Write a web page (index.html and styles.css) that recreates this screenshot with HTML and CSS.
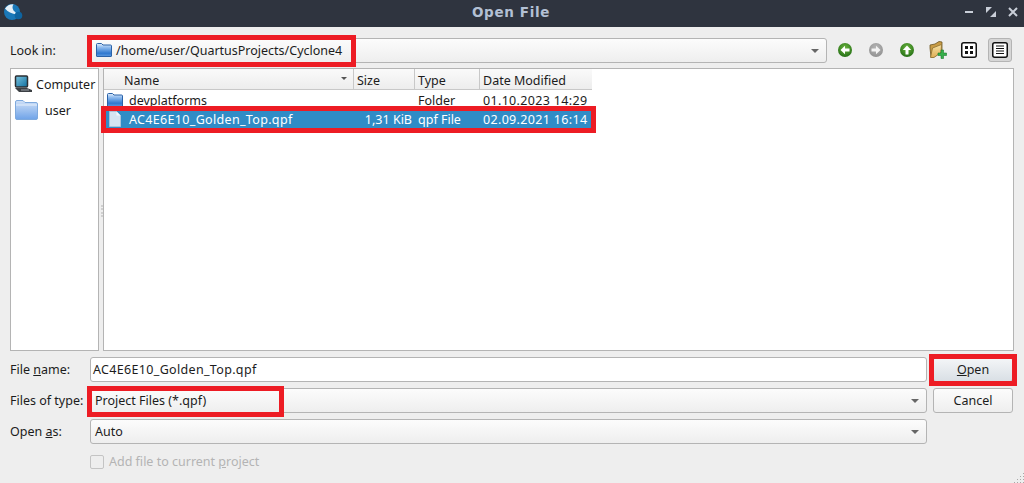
FILE: index.html
```html
<!DOCTYPE html>
<html lang="en">
<head>
    <meta charset="UTF-8">
    <title>Open File</title>
    <link rel="stylesheet" href="styles.css">
</head>
<body>
    <svg width="0" height="0" class="defs">
        <defs>
            <linearGradient id="folderBlue" x1="0" y1="0" x2="0" y2="1">
                <stop offset="0" stop-color="#e3eefb"/>
                <stop offset="0.3" stop-color="#8fbbee"/>
                <stop offset="0.75" stop-color="#2f78cf"/>
                <stop offset="1" stop-color="#5f9be0"/>
            </linearGradient>
            <linearGradient id="folderPale" x1="0" y1="0" x2="0" y2="1">
                <stop offset="0" stop-color="#cfe0f7"/>
                <stop offset="1" stop-color="#6fa3e8"/>
            </linearGradient>
            <linearGradient id="folderTan" x1="0" y1="0" x2="0" y2="1">
                <stop offset="0" stop-color="#f8e3a6"/>
                <stop offset="1" stop-color="#dfae55"/>
            </linearGradient>
            <radialGradient id="greenBall" cx="0.5" cy="0.35" r="0.7">
                <stop offset="0" stop-color="#6cb53e"/>
                <stop offset="1" stop-color="#1f6a12"/>
            </radialGradient>
            <radialGradient id="greyBall" cx="0.5" cy="0.35" r="0.7">
                <stop offset="0" stop-color="#b8b8b8"/>
                <stop offset="1" stop-color="#8e8e8e"/>
            </radialGradient>
            <linearGradient id="screenBlue" x1="0" y1="0" x2="1" y2="1">
                <stop offset="0" stop-color="#7cc4e0"/>
                <stop offset="1" stop-color="#0f6f9e"/>
            </linearGradient>
            <symbol id="folder" viewBox="0 0 16 14">
                <path d="M.5 13V1.500q0-1 1-1h4l1.500 1.500h7.500q1 0 1 1V13q0 .5-.5.5H1q-.5 0-.5-.5z" fill="url(#folderBlue)" stroke="#2a62a8" stroke-width="1"/>
            </symbol>
        </defs>
    </svg>

    <div class="dialog">
        <header class="titlebar">
            <svg class="app-icon" width="20" height="20" viewBox="0 0 20 20">
                <circle cx="9" cy="9" r="8" fill="#1a78b8"/>
                <path d="M2 5.500Q5 1 10.500 1.200 8.500 4 10.500 7.500q2 3 6 3.500-5 1-9.500-1.500Q4 8 2 5.500z" fill="#e6f0f7"/>
                <circle cx="15.500" cy="12.500" r="3.800" fill="#0e64a0"/>
            </svg>
            <span class="title">Open File</span>
            <div class="win-buttons">
                <svg width="10" height="10" viewBox="0 0 10 10"><path d="M1 5h8" stroke="#c9ced8" stroke-width="2"/></svg>
                <svg width="10" height="10" viewBox="0 0 10 10"><path d="M0 0h6L0 6zM10 10H4l6-6z" fill="#c9ced8"/></svg>
                <svg width="10" height="10" viewBox="0 0 10 10"><path d="M1 1l8 8M9 1l-8 8" stroke="#c9ced8" stroke-width="2"/></svg>
            </div>
        </header>

        <main class="content">
            <div class="lookin-row">
                <label class="lookin-label">Look in:</label>
                <div class="combo lookin-combo">
                    <svg class="combo-folder" width="16" height="14"><use href="#folder"/></svg>
                    <span>/home/user/QuartusProjects/Cyclone4</span>
                    <i class="arrow"></i>
                    <b class="mark mark-lookin"></b>
                </div>
                <div class="tools">
                    <svg class="tool" width="16" height="16" viewBox="0 0 16 16">
                        <circle cx="8" cy="8" r="7" fill="url(#greenBall)"/>
                        <path d="M3.500 8L8 3.800V6.500h4.500v3H8v2.700z" fill="#fff"/>
                    </svg>
                    <svg class="tool" width="16" height="16" viewBox="0 0 16 16">
                        <circle cx="8" cy="8" r="7" fill="url(#greyBall)"/>
                        <path d="M12.500 8L8 3.800V6.500H3.500v3H8v2.700z" fill="#f4f4f4"/>
                    </svg>
                    <svg class="tool" width="16" height="16" viewBox="0 0 16 16">
                        <circle cx="8" cy="8" r="7" fill="url(#greenBall)"/>
                        <path d="M8 3.500L12.200 8H9.500v4.500h-3V8H3.800z" fill="#fff"/>
                    </svg>
                    <svg class="tool" width="18" height="18" viewBox="0 0 18 18">
                        <path d="M1 7V4l5-1 4-2.500 3 .5v10l-9 5H2z" fill="#c99c45" stroke="#6d5522" stroke-width=".8"/>
                        <path d="M1.500 16.500L3.500 7l9-3.500-.5 8-7 5z" fill="url(#folderTan)" stroke="#8a6d2e" stroke-width=".8"/>
                        <path d="M12 9v3h3v2.500h-3v3H9.500v-3h-3V12h3V9z" fill="#35b04a" stroke="#1c7a2e" stroke-width=".6" transform="translate(2.500 0)"/>
                    </svg>
                    <span class="view-btn">
                        <svg width="16" height="16" viewBox="0 0 16 16">
                            <rect x=".75" y=".75" width="14.500" height="14.500" rx="2" fill="#fff" stroke="#111" stroke-width="1.500"/>
                            <path d="M4 4h3v3H4zM9 4h3v3H9zM4 9h3v3H4zM9 9h3v3H9z" fill="#111"/>
                        </svg>
                    </span>
                    <span class="view-btn active">
                        <svg width="16" height="16" viewBox="0 0 16 16">
                            <rect x=".75" y=".75" width="14.500" height="14.500" rx="2" fill="#fff" stroke="#111" stroke-width="1.500"/>
                            <path d="M4 4h8M4 6.500h8M4 9h8M4 11.500h8" stroke="#111" stroke-width="1.200"/>
                        </svg>
                    </span>
                </div>
            </div>

            <div class="browser">
                <aside class="sidebar">
                    <div class="side-item side-computer">
                        <svg width="19" height="18" viewBox="0 0 19 18">
                            <rect x="1.500" y="1" width="12" height="11" rx="1" fill="url(#screenBlue)" stroke="#2b2f33" stroke-width="1.500"/>
                            <path d="M1 13h12l5 2v2H5z" fill="#3c4044"/>
                            <path d="M7 15h8" stroke="#9aa0a6"/>
                        </svg>
                        <span>Computer</span>
                    </div>
                    <div class="side-item side-user">
                        <svg width="23" height="20" viewBox="0 0 23 20">
                            <path d="M.5 18V2q0-1.500 1.500-1.500h6L10 2.500h11q1.500 0 1.500 1.500v14q0 1.500-1.500 1.500H2Q.5 19.500.5 18z" fill="url(#folderPale)" stroke="#7ea9dd"/>
                            <path d="M1 5h21" stroke="#e4eefb"/>
                        </svg>
                        <span>user</span>
                    </div>
                </aside>

                <section class="files">
                    <div class="file-head">
                        <div class="col col-name head-cell">Name<i class="sort"></i></div>
                        <div class="col col-size head-cell">Size</div>
                        <div class="col col-type head-cell">Type</div>
                        <div class="col col-date head-cell">Date Modified</div>
                    </div>
                    <div class="file-row">
                        <div class="col col-name cell">
                            <svg width="16" height="14"><use href="#folder"/></svg>
                            <span>devplatforms</span>
                        </div>
                        <div class="col col-size cell"></div>
                        <div class="col col-type cell">Folder</div>
                        <div class="col col-date cell wide-text">01.10.2023 14:29</div>
                    </div>
                    <div class="file-row selected">
                        <div class="col col-name cell wide-text">
                            <svg width="16" height="16" viewBox="0 0 16 16">
                                <path d="M2.500.500h7l4 4v11h-11z" fill="#d5e4f1" stroke="#a9c4db"/>
                                <path d="M9.500.500v4h4z" fill="#f3f8fc"/>
                            </svg>
                            <span>AC4E6E10_Golden_Top.qpf</span>
                        </div>
                        <div class="col col-size cell size-value">1,31 KiB</div>
                        <div class="col col-type cell">qpf File</div>
                        <div class="col col-date cell wide-text">02.09.2021 16:14</div>
                        <b class="mark mark-row"></b>
                    </div>
                    <div class="splitter"></div>
                </section>
            </div>

            <div class="form">
                <label>File <u>n</u>ame:</label>
                <div class="input wide-text">AC4E6E10_Golden_Top.qpf</div>
                <button class="btn btn-open"><u>O</u>pen<b class="mark mark-open"></b></button>

                <label>Files of type:</label>
                <div class="combo">
                    <span>Project Files (*.qpf)</span>
                    <i class="arrow"></i>
                    <b class="mark mark-type"></b>
                </div>
                <button class="btn">Cancel</button>

                <label>Open <u>a</u>s:</label>
                <div class="combo">
                    <span>Auto</span>
                    <i class="arrow"></i>
                </div>
                <div></div>

                <div></div>
                <div class="check-row">
                    <i class="checkbox"></i>
                    <span>Add file to current <u>p</u>roject</span>
                </div>
            </div>
        </main>
    </div>
    <div class="grip"></div>
</body>
</html>
```

FILE: styles.css
```css
* {
    box-sizing: border-box;
}
html, body {
    margin: 0;
    height: 100%;
    overflow: hidden;
}
body {
    font-family: "Noto Sans", sans-serif;
    font-size: 12.500px;
    color: #1c1c1c;
    background: #eeeeee;
}
.defs {
    position: absolute;
}
.wide-text {
    letter-spacing: 0.33px;
}
.titlebar {
    height: 27px;
    background: #2f343f;
    display: flex;
    align-items: center;
    justify-content: center;
    position: relative;
}
.app-icon {
    position: absolute;
    left: 3px;
    top: 3px;
}
.title {
    font-family: "DejaVu Sans", sans-serif;
    font-weight: bold;
    font-size: 13.500px;
    color: #b3c0d4;
    letter-spacing: 0.65px;
    margin: -4px 2px 0 0;
}
.win-buttons {
    position: absolute;
    right: 6px;
    top: 7px;
    display: flex;
    gap: 12px;
}
.content {
    padding: 8px 10px 0;
}
.lookin-row {
    display: flex;
    align-items: center;
    height: 30px;
}
.lookin-label {
    flex: none;
    width: 80px;
}
.combo {
    position: relative;
    display: flex;
    align-items: center;
    height: 25px;
    padding-left: 4px;
    border: 1px solid #b4b4b4;
    border-radius: 3px;
    background: linear-gradient(#fcfcfc, #eeeeee);
}
.lookin-combo {
    flex: none;
    width: 737px;
    padding-left: 5px;
    gap: 4px;
}
.combo-folder {
    flex: none;
}
.arrow {
    position: absolute;
    right: 7px;
    top: 10px;
    width: 0;
    height: 0;
    border-left: 4px solid transparent;
    border-right: 4px solid transparent;
    border-top: 4px solid #666;
}
.tools {
    flex: 1;
    display: flex;
    align-items: center;
    padding-left: 10px;
}
.tool {
    flex: none;
    margin-right: 15px;
}
.tool:nth-child(4) {
    margin-left: -1px;
    margin-right: 10px;
}
.view-btn {
    flex: none;
    width: 24px;
    height: 24px;
    display: flex;
    align-items: center;
    justify-content: center;
    border: 1px solid transparent;
    border-radius: 3px;
}
.view-btn.active {
    margin-left: 7px;
    background: #d6d6d6;
    border-color: #b4b4b4;
}
.browser {
    display: flex;
    gap: 4px;
    height: 283px;
    margin-top: 3px;
}
.sidebar {
    width: 89px;
    background: #fff;
    border: 1px solid #b4b4b4;
    padding-top: 5px;
}
.side-item {
    display: flex;
    align-items: center;
}
.side-computer {
    height: 20px;
    padding-left: 3px;
    gap: 3px;
}
.side-user {
    height: 32px;
    padding-left: 4px;
    gap: 7px;
}
.files {
    flex: 1;
    position: relative;
    background: #fff;
    border: 1px solid #b4b4b4;
}
.file-head {
    display: flex;
    height: 21px;
    width: 488px;
    background: linear-gradient(#fafafa, #ececec);
}
.head-cell {
    position: relative;
    border-right: 1px solid #c8c8c8;
    border-bottom: 1px solid #c8c8c8;
    padding: 2px 0 0 3px;
    line-height: 20px;
}
.head-cell:first-child {
    padding-left: 20px;
}
.head-cell:last-child {
    border-right: none;
}
.sort {
    position: absolute;
    right: 6px;
    top: 8px;
    width: 0;
    height: 0;
    border-left: 3px solid transparent;
    border-right: 3px solid transparent;
    border-top: 3px solid #555;
}
.file-row {
    position: relative;
    display: flex;
    width: 488px;
    height: 18px;
    margin-top: 1px;
}
.col-name {
    width: 250px;
}
.col-size {
    width: 61px;
}
.col-type {
    width: 65px;
}
.col-date {
    width: 112px;
}
.cell {
    display: flex;
    align-items: center;
    padding-left: 3px;
    white-space: nowrap;
}
.cell svg {
    margin-right: 6px;
    flex: none;
}
.size-value {
    justify-content: flex-end;
    padding-right: 3px;
}
.file-row.selected {
    background: #308cc6;
    color: #fff;
}
.splitter {
    position: absolute;
    left: -3px;
    top: 136px;
    width: 2px;
    height: 12px;
    border-left: 2px dotted #cfcfcf;
}
.form {
    display: grid;
    grid-template-columns: 80px 837px 80px;
    grid-auto-rows: 25px;
    row-gap: 6px;
    margin-top: 6px;
    align-items: center;
}
.form .btn {
    margin-left: 6px;
    width: 80px;
}
.input {
    height: 25px;
    padding-left: 2px;
    line-height: 23px;
    background: #fff;
    border: 1px solid #b4b4b4;
    border-radius: 3px;
}
.btn {
    position: relative;
    height: 25px;
    padding: 0;
    font: inherit;
    color: inherit;
    border: 1px solid #b4b4b4;
    border-radius: 3px;
    background: linear-gradient(#fcfcfc, #eeeeee);
}
.btn-open {
    background: linear-gradient(#f4f6f8, #d9dfe5);
}
.check-row {
    display: flex;
    align-items: center;
    gap: 5px;
    margin-bottom: 2px;
    color: #b4b4b4;
}
.checkbox {
    width: 14px;
    height: 14px;
    border: 1px solid #c4c4c4;
    border-radius: 2px;
}
.grip {
    position: absolute;
    right: 0;
    bottom: 0;
    width: 11px;
    height: 11px;
    background: radial-gradient(circle, #a8a8a8 1px, transparent 1px) 0 0 / 3px 3px;
    clip-path: polygon(100% 0, 100% 100%, 0 100%);
}
/* red annotation boxes drawn over the screenshot */
.mark {
    position: absolute;
    border: 5px solid #ed1c24;
    pointer-events: none;
}
.mark-lookin {
    left: -4px;
    top: -4px;
    width: 269px;
    height: 32px;
}
.mark-row {
    left: -3px;
    top: -4px;
    width: 495px;
    height: 27px;
}
.mark-open {
    left: -5px;
    top: -4px;
    width: 88px;
    height: 32px;
}
.mark-type {
    left: -4px;
    top: -3px;
    width: 197px;
    height: 31px;
}
```
